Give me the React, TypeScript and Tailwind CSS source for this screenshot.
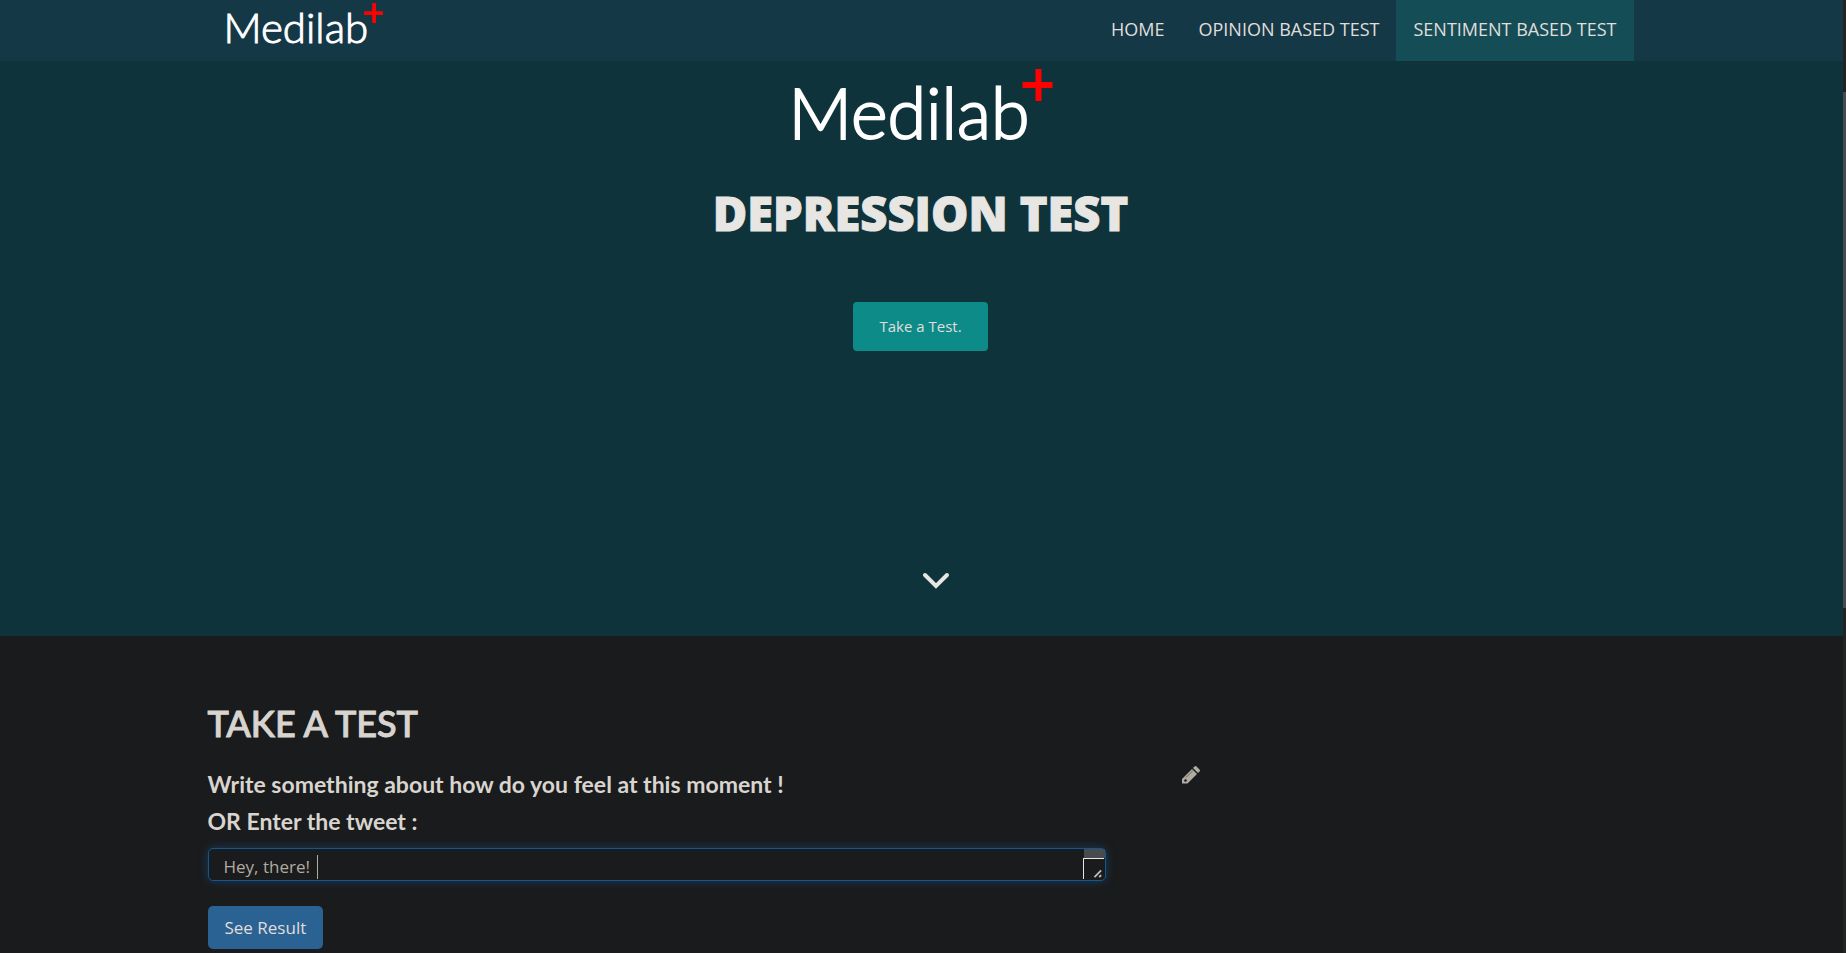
import { useState } from "react";

function Logo({ large = false }: { large?: boolean }) {
  return (
    <span className={large ? "flex items-start text-[70px] leading-[94px]" : "flex items-start text-[42px] leading-[55px]"}>
      <span className={large ? "font-['Lato',sans-serif] font-light text-white [-webkit-text-stroke:2px_white]" : "font-['Lato',sans-serif] font-light text-white [-webkit-text-stroke:1px_white]"}>Medilab</span>
      <svg viewBox="0 0 30 32" aria-hidden="true" className={large ? "-ml-2 mt-1 h-8 w-[31px]" : "-ml-1 mt-[3px] h-5 w-[19px]"}>
        <path d="M13 0h6v13h11v6H19v13h-6V19H0v-6h13z" fill="#f00" />
      </svg>
    </span>
  );
}

function PencilIcon() {
  return (
    <svg viewBox="0 0 18 18" aria-hidden="true" className="ml-[76px] h-[18px] w-[18px]">
      <path d="M10 3l5 5-9.500 9.500H0V13z" fill="#b2aba1" />
      <path d="M11 2l1.500-1.500q1-1 2 0l3 3q1 1 0 2L16 7z" fill="#b2aba1" />
      <path d="M4 11.500L11 4.500" stroke="#6b6761" strokeWidth="1" />
      <circle cx="3.500" cy="14.500" r="1.300" fill="#1a1b1c" />
    </svg>
  );
}

export default function App() {
  const [text, setText] = useState("Hey, there! ");
  return (
    <div className="flex min-h-screen bg-[#1a1b1c] font-['Open_Sans',sans-serif] text-[#e0dedb]">
      <div className="min-w-0 flex-1">
        <header className="bg-[#153847] pr-[2px]">
          <div className="mx-auto flex h-[61px] max-w-[1426px] justify-between">
            <a href="#home" aria-label="Medilab" className="pl-4"><Logo /></a>
            <nav className="flex text-lg leading-[59px]">
              <a href="#home" className="px-[17px]">HOME</a>
              <a href="#opinion" className="px-[17px]">OPINION BASED TEST</a>
              <a href="#test" className="bg-[#154d57] px-[17px]">SENTIMENT BASED TEST</a>
            </nav>
          </div>
        </header>
        <section className="flex h-[575px] flex-col items-center bg-[#0f333a] pt-1 pr-[2px]">
          <Logo large />
          <h1 className="mt-6 font-['Open_Sans',sans-serif] text-[47px] leading-[60px] font-extrabold text-[#e8e6e3] [-webkit-text-stroke:1px_#e8e6e3]">DEPRESSION TEST</h1>
          <a href="#test" className="mt-[59px] rounded bg-[#0c8b88] px-[26px] text-[15px] leading-[49px]">Take a Test.</a>
          <a href="#test" aria-label="Scroll down" className="mt-[221px] ml-[30px]">
            <svg viewBox="0 0 28 18" className="h-[18px] w-7" fill="none" stroke="#e8e6e3" strokeWidth="4" strokeLinecap="round"><path d="M3 3l11 11L25 3" /></svg>
          </a>
        </section>
        <section id="test" className="pt-[64px] pr-[2px]">
          <div className="mx-auto max-w-[1426px]">
            <h2 className="font-['Lato',sans-serif] text-[36px] leading-[46px] font-medium text-[#d8d4cf] [-webkit-text-stroke:1px_#d8d4cf]">TAKE A TEST</h2>
            <div className="mt-5 flex items-start">
              <div className="w-[898px]">
                <label htmlFor="feeling" className="block font-['Lato',sans-serif] text-[23px] leading-[37px] font-bold text-[#d8d4cf]">
                  Write something about how do you feel at this moment !<br />OR Enter the tweet :
                </label>
                <div className="relative mt-2 h-[33px]">
                  <textarea id="feeling" value={text} onChange={(e) => setText(e.target.value)} className="block h-full w-full resize-none overflow-hidden rounded-[5px] border border-[#14568f] bg-[#1a1b1c] px-[15px] pt-[6px] text-[17px] leading-6 text-[#b2aba1] shadow-[0_0_10px_#14568f99] outline-none" />
                  <span className="absolute top-[7px] left-[109px] h-6 w-px bg-[#b2aba1]" />
                  <span className="absolute top-px right-px h-[9px] w-[21px] bg-[#484b4d]" />
                  <span className="absolute right-[2px] bottom-[2px] h-[21px] w-[21px] border-t border-l border-[#e8e6e3]">
                    <svg viewBox="0 0 21 21" className="h-full w-full" stroke="#bbb" strokeWidth="2"><path d="M11 19l7-7M16 19l2-2" /></svg>
                  </span>
                </div>
                <button type="button" className="mt-[25px] block rounded-[5px] bg-[#2a6294] px-[17px] text-[17px] leading-[43px] font-medium">See Result</button>
              </div>
              <PencilIcon />
            </div>
          </div>
        </section>
      </div>
      <div className="w-[3px] bg-[#222423] pt-[92px]"><div className="h-[516px] bg-[#484b4d]" /></div>
    </div>
  );
}
